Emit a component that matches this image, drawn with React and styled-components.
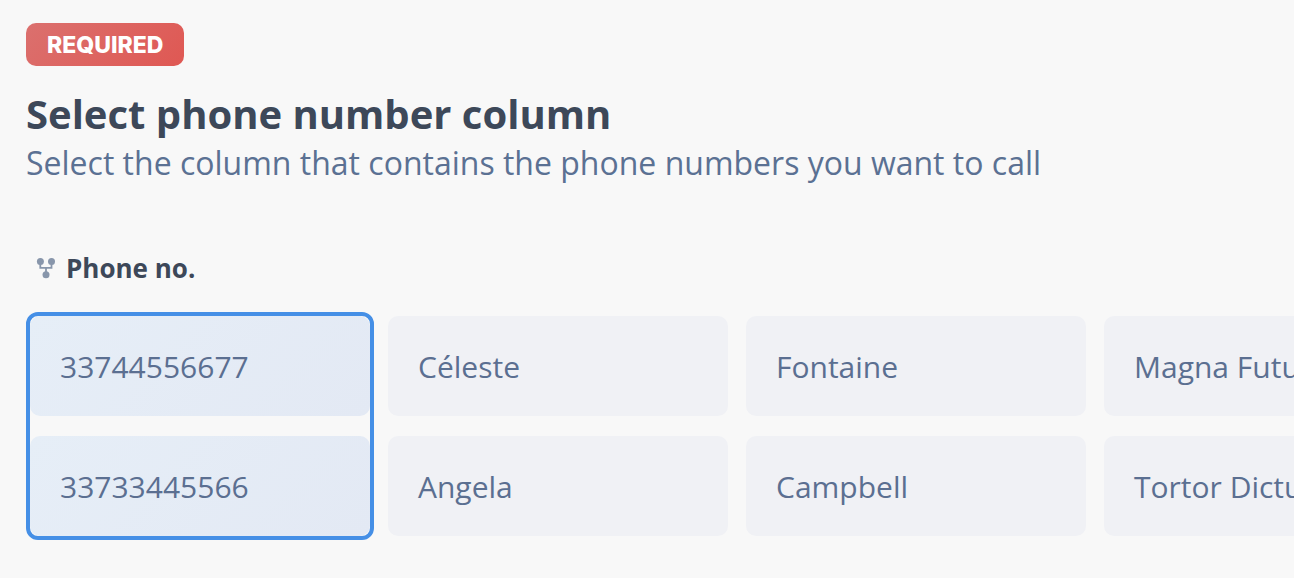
import React from "react";
import styled, { createGlobalStyle } from "styled-components";

const rows = [
  ["33744556677", "Céleste", "Fontaine", "Magna Futurum"],
  ["33733445566", "Angela", "Campbell", "Tortor Dictum"],
];

const App = () => {
  return (
    <>
      <GlobalStyle />
      <Page>
        <Badge>REQUIRED</Badge>
        <Title>Select phone number column</Title>
        <Subtitle>
          Select the column that contains the phone numbers you want to call
        </Subtitle>
        <Scroller>
          <Table>
            <Head>
              <Row>
                <HeadCell scope='col'>
                  <ForkIcon />
                  Phone no.
                </HeadCell>
              </Row>
            </Head>
            <Body>
              {rows.map((row) => (
                <Row key={row[0]}>
                  {row.map((value, index) => (
                    <Cell key={value} $selected={index === 0}>
                      {value}
                    </Cell>
                  ))}
                </Row>
              ))}
            </Body>
          </Table>
        </Scroller>
      </Page>
    </>
  );
};

const ForkIcon = () => (
  <Icon viewBox='0 0 20 22' aria-hidden='true'>
    <path
      d='M4.300 5v5.800h11.200V5M10 10.800V17'
      fill='none'
      stroke='currentColor'
      strokeWidth='1.800'
    />
    <circle cx='4.400' cy='4.500' r='3.500' fill='currentColor' />
    <circle cx='15.500' cy='4.500' r='3.500' fill='currentColor' />
    <circle cx='10' cy='17.700' r='3.500' fill='currentColor' />
  </Icon>
);

export default App;

const GlobalStyle = createGlobalStyle`
  body {
    margin: 0;
    background: #f8f8f8;
    font-family: "Open Sans", "Noto Sans", sans-serif;
    color: #3d4859;
  }
`;

const Page = styled.main`
  display: flex;
  flex-direction: column;
  align-items: flex-start;
  padding: 23px 0 38px 26px;
  overflow: hidden;
`;

const Badge = styled.span`
  padding: 1px 21px 0;
  border-radius: 10px;
  background: linear-gradient(135deg, #db706e, #df5853);
  color: #fff;
  font-family: Inter, sans-serif;
  font-size: 23px;
  font-weight: 800;
  line-height: 42px;
`;

const Title = styled.h1`
  margin: 22px 0 0;
  font-size: 40px;
  font-weight: 700;
  line-height: 52px;
`;

const Subtitle = styled.p`
  margin: 0;
  color: #5b7193;
  font-size: 32px;
  line-height: 46px;
`;

const Scroller = styled.div`
  box-sizing: border-box;
  width: 100%;
  margin-top: 60px;
  padding: 0 0 4px 4px;
  overflow: hidden;
`;

const Table = styled.table`
  display: block;
`;

const Head = styled.thead`
  display: block;
`;

const Body = styled.tbody`
  display: flex;
  flex-direction: column;
  gap: 20px;
  margin-top: 26px;
  position: relative;

  /* frame around the selected column */
  &::after {
    content: "";
    position: absolute;
    top: -4px;
    bottom: -4px;
    left: -4px;
    width: 340px;
    border: 4px solid #458fe6;
    border-radius: 12px;
    pointer-events: none;
  }
`;

const Row = styled.tr`
  display: flex;
  gap: 18px;
`;

const HeadCell = styled.th`
  display: flex;
  align-items: center;
  gap: 10px;
  padding: 0 6px;
  font-size: 26px;
  font-weight: 700;
  line-height: 44px;
`;

const Icon = styled.svg`
  width: 20px;
  height: 22px;
  color: #8896ab;
`;

const Cell = styled.td`
  box-sizing: border-box;
  flex: 0 0 340px;
  padding: 2px 30px 0;
  border-radius: 10px;
  background: ${({ $selected }) =>
    $selected ? "linear-gradient(135deg, #e6eef7, #e3e9f4)" : "#f0f1f5"};
  color: #5b6f91;
  font-size: 30px;
  font-weight: 500;
  line-height: 98px;
  white-space: nowrap;
`;
